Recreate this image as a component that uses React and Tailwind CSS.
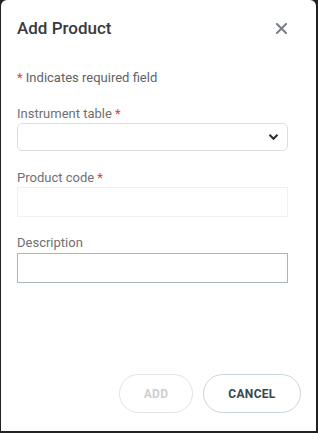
export default function App() {
  return (
    <div className="w-[318px] h-[433px] bg-[#222] flex" style={{ fontFamily: "Roboto, 'Liberation Sans', sans-serif" }}>
      <div className="ml-px mr-[2px] mb-[2px] flex-1 bg-white rounded-t-[6px] flex flex-col">
        <div className="flex items-center justify-between pl-4 pr-[29px] pt-[20px]">
          <h1 className="text-[17px] font-medium text-[#3a3a3a] leading-[17px]">Add Product</h1>
          <svg width="11" height="11" viewBox="0 0 11 11">
            <path d="M1 1L10 10M10 1L1 10" stroke="#7a7f85" strokeWidth="2" strokeLinecap="square" />
          </svg>
        </div>
        <div className="px-4">
          <p className="mt-[33px] text-[13px] text-[#5f6368] leading-[16px]">
            <span className="text-[#e53935]">*</span> Indicates required field
          </p>
          <label className="block mt-[20px] text-[13px] text-[#707070] leading-[16px]">
            Instrument table <span className="text-[#e53935]">*</span>
          </label>
          <div className="mt-[1px] h-[28px] w-[271px] border border-[#dcdde0] rounded-[5px] flex items-center justify-end pr-[8px]">
            <svg width="11" height="8" viewBox="0 0 11 8">
              <path d="M1.5 1.8L5.5 5.8L9.5 1.8" fill="none" stroke="#2b2f33" strokeWidth="2" />
            </svg>
          </div>
          <label className="block mt-[19px] text-[13px] text-[#707070] leading-[16px]">
            Product code <span className="text-[#e53935]">*</span>
          </label>
          <div className="mt-[1px] h-[30px] w-[271px] border border-[#f0f0f0]"></div>
          <label className="block mt-[18px] text-[13px] text-[#707070] leading-[16px]">
            Description
          </label>
          <div className="mt-[2px] h-[30px] w-[271px] border border-[#a7b6bc]"></div>
        </div>
        <div className="mt-auto flex justify-end gap-[10px] pr-[15px] pb-[18px]">
          <button className="w-[74px] h-[39px] rounded-full border border-[#e3e3e3] text-[12px] font-bold text-[#cfcfcf] tracking-[0.3px]">ADD</button>
          <button className="w-[98px] h-[39px] rounded-full border border-[#c9d5da] text-[12px] font-bold text-[#37474f] tracking-[0.3px]">CANCEL</button>
        </div>
      </div>
    </div>
  );
}
